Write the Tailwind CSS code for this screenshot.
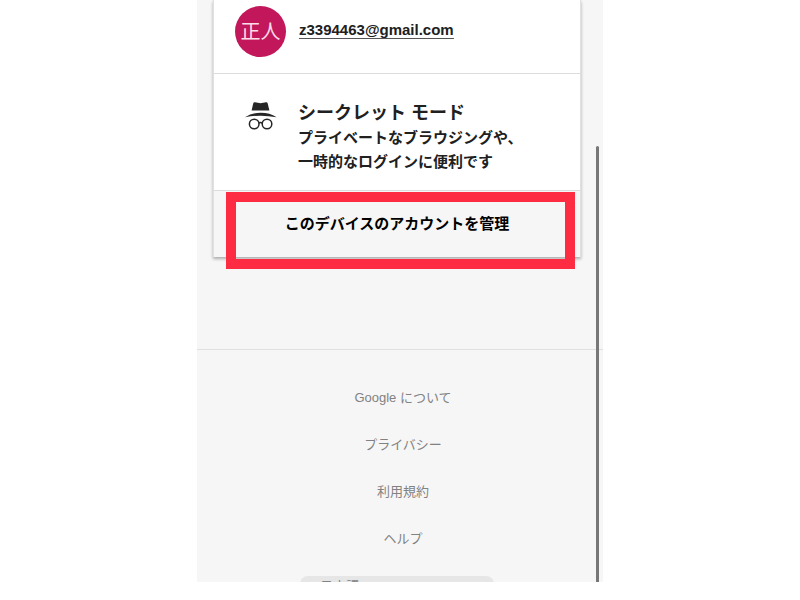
<!DOCTYPE html>
<html lang="ja">
<head>
    <meta charset="UTF-8">
    <meta name="viewport" content="width=device-width, initial-scale=1.0">
    <title>アカウントの選択</title>
    <script src="https://cdn.jsdelivr.net/npm/@tailwindcss/browser@4"></script>
</head>
<body class="bg-white text-[#202020] font-['Liberation_Sans','Noto_Sans_CJK_JP',sans-serif]">

    <div class="relative w-full max-w-[406px] h-[97vh] mx-auto bg-[#f6f6f6] overflow-hidden">

        <!-- Account card -->
        <main class="ml-4 mr-[22px] bg-white border-x border-[#e0e0e0] shadow-[0_2px_3px_rgba(0,0,0,0.3)]">

            <div class="flex items-start gap-[13px] px-[21px] pt-[6px] pb-4 border-b border-[#dcdcdc]">
                <div class="w-[51px] h-[51px] shrink-0 rounded-full bg-[#c2185b] text-[#fbdce8] text-xl leading-none flex items-center justify-center">正人</div>
                <a href="#" class="mt-4 text-[15px] leading-4 font-bold border-b border-[#555]">z3394463@gmail.com</a>
            </div>

            <a href="#" class="flex items-start gap-[21px] pl-[31px] pr-5 pt-[26px] pb-4 border-b border-[#dcdcdc]">
                <!-- Incognito icon -->
                <svg class="w-8 h-8 shrink-0" viewBox="0 0 32 32" fill="none" aria-hidden="true">
                    <path d="M8.2 3.4Q8.6 2 10 2.3L15.5 3.2L21 2.3Q22.4 2 22.7 3.4L24.4 10.6H6.6Z" fill="#262626"/>
                    <path d="M0 17.2Q6.6 12.8 15.7 12.8T31.6 17.2Q24 15.7 15.7 15.7T0 17.2Z" fill="#262626"/>
                    <circle cx="9.2" cy="24" r="4.8" stroke="#262626" stroke-width="1.5"/>
                    <circle cx="22" cy="24" r="4.8" stroke="#262626" stroke-width="1.5"/>
                    <path d="M13.8 23.2Q15.6 21.8 17.4 23.2" stroke="#262626" stroke-width="1.5"/>
                </svg>
                <div class="-mr-4 font-bold">
                    <h2 class="text-lg leading-[26px]">シークレット モード</h2>
                    <p class="text-[15px] leading-6">プライベートなブラウジングや、<br>一時的なログインに便利です</p>
                </div>
            </a>

            <div class="relative bg-[#f6f6f6]">
                <button type="button" class="block w-full h-[66px] text-[15px] font-bold text-black">このデバイスのアカウントを管理</button>
                <!-- Highlight frame -->
                <div class="absolute left-3 right-[5px] top-px -bottom-3 border-10 border-[#fe2c42] pointer-events-none"></div>
            </div>
        </main>

        <!-- Footer links -->
        <footer class="mt-[92px] pt-9 border-t border-[#e0e0e0] text-[13px] text-[#828282]">
            <nav class="flex flex-col items-center gap-[23px] pl-[6px]">
                <a href="#" class="leading-6">Google について</a>
                <a href="#" class="leading-6">プライバシー</a>
                <a href="#" class="leading-6">利用規約</a>
                <a href="#" class="leading-6">ヘルプ</a>
                <select aria-label="言語" class="appearance-none w-[194px] h-[22px] mt-[2px] mr-3 pl-5 rounded-lg bg-[#e6e6e6] text-[#828282]">
                    <option>日本語</option>
                </select>
            </nav>
        </footer>

        <!-- Scroll indicator -->
        <div class="absolute right-1 top-1/4 bottom-0 w-[3px] rounded-t-sm bg-[#777]"></div>
    </div>

</body>
</html>
